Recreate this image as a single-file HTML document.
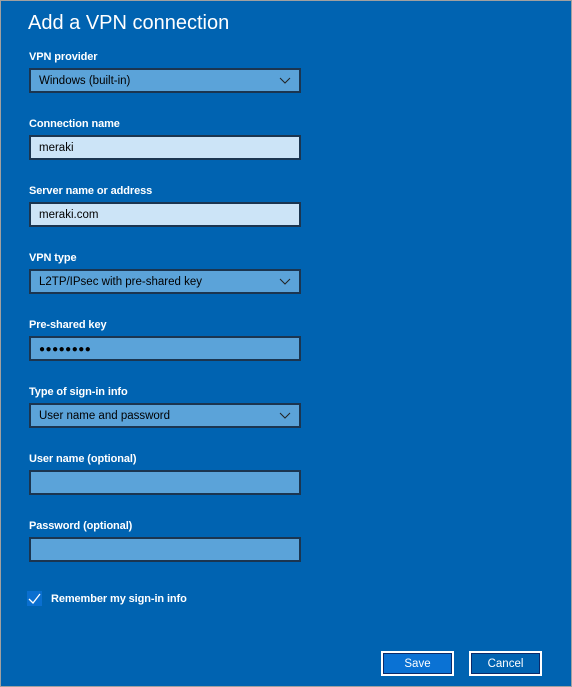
<!DOCTYPE html>
<html><head><style>
*{margin:0;padding:0;box-sizing:border-box}
body{width:572px;height:687px;background:#0063b1;border:1px solid #a0a0a0;position:relative;overflow:hidden;font-family:"Liberation Sans",sans-serif;color:#fff}
h1{position:absolute;left:27px;top:11px;font-size:20px;font-weight:normal}
.l{position:absolute;left:28px;font-size:11px;font-weight:bold;letter-spacing:-0.1px}
.f{position:absolute;left:28px;width:272px;height:25px;background:#5ba3d9;border:2px solid #1b3550;font-size:11.5px;color:#000;padding:5px 0 0 8px}
.f.t{background:#cce4f7}
.f svg{position:absolute;right:8px;top:7px}
.btn{position:absolute;top:650px;height:25px;border:2px solid #fff;outline:1px solid #0a2a6a;outline-offset:-3px;font-size:11.5px;text-align:center;line-height:22px}
</style></head><body>
<h1>Add a VPN connection</h1>
<div class="l" style="top:50px">VPN provider</div>
<div class="f" style="top:67px">Windows (built-in)<svg width="12" height="7"><path d="M1 1l5 5 5-5" stroke="#222" fill="none"/></svg></div>
<div class="l" style="top:117px">Connection name</div>
<div class="f t" style="top:134px">meraki</div>
<div class="l" style="top:184px">Server name or address</div>
<div class="f t" style="top:201px">meraki.com</div>
<div class="l" style="top:251px">VPN type</div>
<div class="f" style="top:268px">L2TP/IPsec with pre-shared key<svg width="12" height="7"><path d="M1 1l5 5 5-5" stroke="#222" fill="none"/></svg></div>
<div class="l" style="top:318px">Pre-shared key</div>
<div class="f" style="top:335px;letter-spacing:0.5px;font-size:10px;padding-top:6px">●●●●●●●●</div>
<div class="l" style="top:385px">Type of sign-in info</div>
<div class="f" style="top:402px">User name and password<svg width="12" height="7"><path d="M1 1l5 5 5-5" stroke="#222" fill="none"/></svg></div>
<div class="l" style="top:452px">User name (optional)</div>
<div class="f" style="top:469px"></div>
<div class="l" style="top:519px">Password (optional)</div>
<div class="f" style="top:536px"></div>
<div style="position:absolute;left:26px;top:590px;width:15px;height:15px;background:#0a6fd0"><svg width="15" height="15"><path d="M2 8l4 4 7-9" stroke="#fff" stroke-width="1.3" fill="none"/></svg></div>
<div class="l" style="left:50px;top:592px">Remember my sign-in info</div>
<div class="btn" style="left:380px;width:73px;background:#0a72d4">Save</div>
<div class="btn" style="left:468px;width:73px;background:#0063b1">Cancel</div>
</body></html>
